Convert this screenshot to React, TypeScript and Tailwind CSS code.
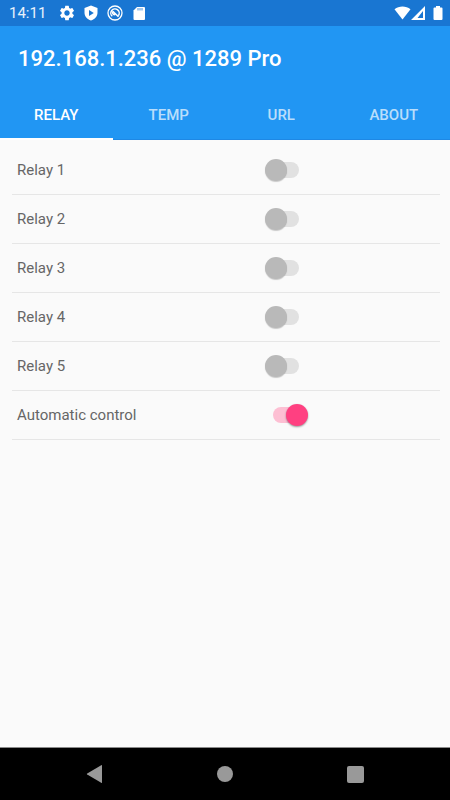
import { useState } from "react";
import { MdSettings } from "react-icons/md";

const tabs = ["RELAY", "TEMP", "URL", "ABOUT"];

type SwitchItem = { id: string; label: string; on: boolean };

const initialItems: SwitchItem[] = [
  { id: "relay1", label: "Relay 1", on: false },
  { id: "relay2", label: "Relay 2", on: false },
  { id: "relay3", label: "Relay 3", on: false },
  { id: "relay4", label: "Relay 4", on: false },
  { id: "relay5", label: "Relay 5", on: false },
  { id: "auto", label: "Automatic control", on: true },
];

function StatusBar() {
  return (
    <div className="flex h-[26px] items-center justify-between bg-[#1976d2] pr-1 pl-[9px] text-white">
      <div className="flex items-center gap-[6px]">
        <span className="mr-[6px] text-[15px] leading-5 text-white/90">14:11</span>
        <MdSettings className="size-[18px]" />
        <svg className="size-[18px]" viewBox="0 0 18 18" fill="currentColor">
          <path
            fillRule="evenodd"
            d="M9 1.500 2.500 4v4.600c0 3.900 2.700 6.900 6.500 8 3.800-1.100 6.500-4.100 6.500-8V4L9 1.500ZM7 6v6l4.800-3L7 6Z"
          />
        </svg>
        <svg className="size-[18px]" viewBox="0 0 18 18" fill="none" stroke="currentColor">
          <circle cx="9" cy="9" r="7" strokeWidth="1.300" />
          <path d="M6.300 12.300a4.200 4.200 0 1 1 6-.6" strokeWidth="1.500" />
          <path d="M6.800 7.300 12.500 12.800M6.500 7.500c-.4 1.700.5 3.200 2.700 3.200" strokeWidth="1.500" />
        </svg>
        <svg className="size-[18px]" viewBox="0 0 18 18">
          <path d="M7 3h7q1 0 1 1v11q0 1-1 1H4.500q-1 0-1-1V6.500Z" fill="currentColor" />
          <path d="M8 4v2.500M10 4v2.500M12 4v2.500" stroke="#1976d2" strokeWidth=".8" />
        </svg>
      </div>
      <div className="flex items-center">
        <svg className="h-[14px] w-[17px]" viewBox="0 0 17 14" fill="currentColor">
          <path d="M.5 3.300C5-.4 12-.4 16.500 3.300L8.500 13.500Z" />
        </svg>
        <svg className="h-[14px] w-[15px]" viewBox="0 0 15 14" fill="currentColor">
          <path fillRule="evenodd" d="M0 14 14 0v14ZM6.500 12 12 5V12Z" />
        </svg>
        <svg className="ml-1 h-[14px] w-4" viewBox="0 0 16 14" fill="currentColor">
          <path d="M6 0h4v1.500h1.500q1 0 1 1V13q0 1-1 1h-7q-1 0-1-1V2.500q0-1 1-1H6Z" />
        </svg>
      </div>
    </div>
  );
}

function Switch({ id, checked, onChange }: { id: string; checked: boolean; onChange: () => void }) {
  return (
    <span className="relative flex h-[22px] w-[43px] items-center">
      <input
        id={id}
        type="checkbox"
        role="switch"
        checked={checked}
        onChange={onChange}
        className="peer absolute inset-0 z-10 m-0 cursor-pointer appearance-none"
      />
      <span className="mx-auto h-4 w-[26px] rounded-full bg-[#e1e1e1] peer-checked:bg-[#fdbfd3]" />
      <span className="absolute left-0 size-[22px] rounded-full bg-[#b9b9b9] shadow-[0_1px_1px_rgba(0,0,0,0.2)] peer-checked:left-[21px] peer-checked:bg-[#ff4081] peer-checked:shadow-[0_1px_2px_rgba(0,0,0,0.4)]" />
    </span>
  );
}

export default function App() {
  const [tab, setTab] = useState("RELAY");
  const [items, setItems] = useState(initialItems);

  const toggle = (id: string) => {
    setItems(items.map((item) => (item.id === id ? { ...item, on: !item.on } : item)));
  };

  return (
    <div className="flex min-h-screen flex-col bg-[#fafafa] font-['Roboto',sans-serif]">
      <StatusBar />
      <header className="border-b border-[#1e88e5] bg-[#2196f3] text-white">
        <h1 className="flex h-16 items-center px-[18px] text-[22px] font-medium">192.168.1.236 @ 1289 Pro</h1>
        <nav className="-mb-px grid h-[50px] grid-cols-4" role="tablist">
          {tabs.map((name) => (
            <button
              key={name}
              type="button"
              role="tab"
              aria-selected={tab === name}
              onClick={() => setTab(name)}
              className={
                tab === name
                  ? "border-b-2 border-white pt-0.5 text-[15px] font-medium text-white"
                  : "border-b-2 border-transparent pt-0.5 text-[15px] font-medium text-white/70"
              }
            >
              {name}
            </button>
          ))}
        </nav>
      </header>
      <main className="flex-1 pt-[6px] pr-[10px] pl-3">
        <ul>
          {items.map((item) => (
            <li key={item.id} className="grid h-[49px] grid-cols-[59%_1fr] items-center border-b border-[#e6e6e6]">
              <label htmlFor={item.id} className="pl-[5px] text-[15px] text-[#666666]">
                {item.label}
              </label>
              <Switch id={item.id} checked={item.on} onChange={() => toggle(item.id)} />
            </li>
          ))}
        </ul>
      </main>
      <footer className="grid h-[53px] grid-cols-3 items-center justify-items-center border-t border-[#8a8a8a] bg-black px-[30px] text-[#999999]">
        <button type="button" aria-label="Back">
          <svg className="size-[18px]" viewBox="0 0 18 18" fill="currentColor">
            <path d="M16 .6v16.800q0 .8-.8.4L1.200 9.500q-.7-.5 0-1L15.200.2q.8-.4.8.4Z" />
          </svg>
        </button>
        <button type="button" aria-label="Home" className="size-4 rounded-full bg-[#999999]" />
        <button type="button" aria-label="Recent apps" className="size-[17px] rounded-xs bg-[#999999]" />
      </footer>
    </div>
  );
}
